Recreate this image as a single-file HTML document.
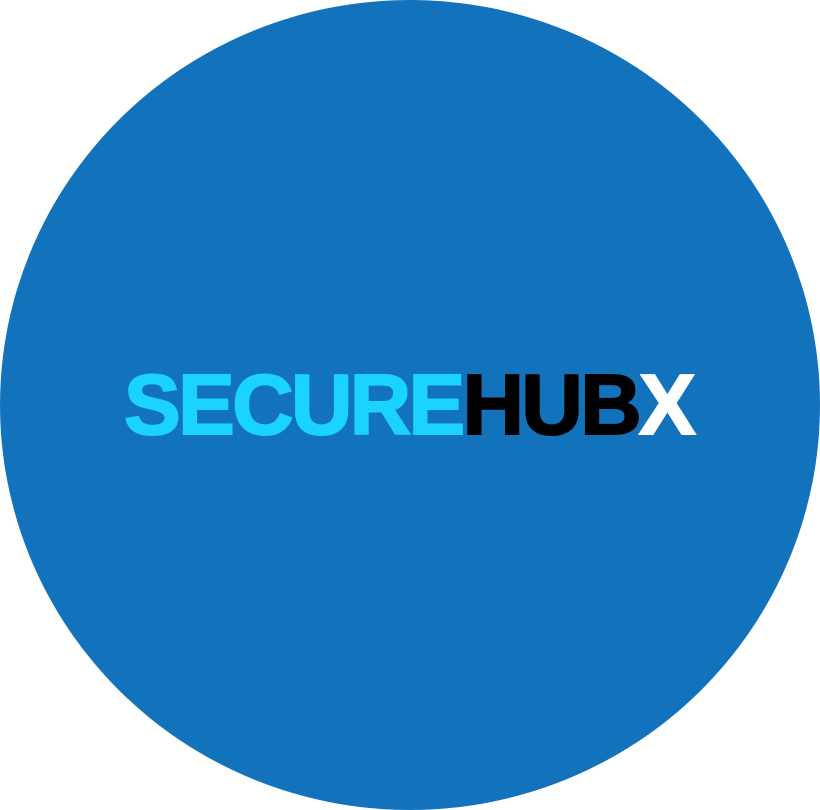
<!DOCTYPE html>
<html><head><style>
html,body{margin:0;padding:0;width:820px;height:810px;background:#fff;overflow:hidden}
.c{position:absolute;left:0;top:0;width:820px;height:810px;border-radius:50%;background:#1273BC}
.t{position:absolute;left:124px;top:363px;font-family:"Liberation Sans",Arial,sans-serif;font-weight:700;font-size:85px;line-height:1;letter-spacing:-2.6px;white-space:nowrap;-webkit-text-stroke:2px currentColor}
</style></head><body>
<div class="c"></div>
<div class="t"><span style="color:#1BD3FF">SECURE</span><span style="color:#000">HUB</span><span style="color:#fff">X</span></div>
</body></html>
